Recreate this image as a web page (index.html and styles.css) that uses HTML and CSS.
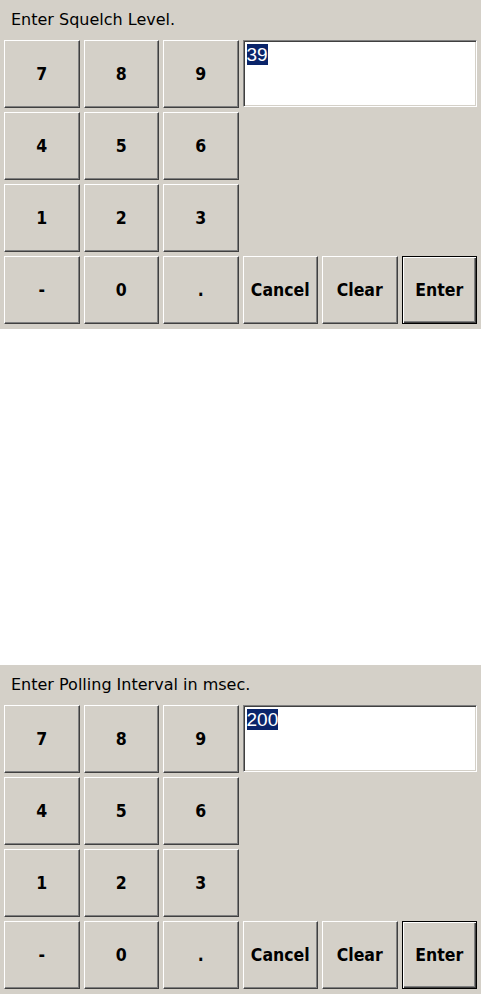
FILE: index.html
```html
<!DOCTYPE html>
<html>
<head>
<meta charset="utf-8">
<link rel="stylesheet" href="styles.css">
</head>
<body>
<div class="panel">
  <div class="prompt">Enter Squelch Level.</div>
  <div class="pad">
    <button class="key">7</button>
    <button class="key">8</button>
    <button class="key">9</button>
    <div class="field"><span class="sel">39</span></div>
    <button class="key">4</button>
    <button class="key">5</button>
    <button class="key">6</button>
    <div class="blank"></div>
    <button class="key">1</button>
    <button class="key">2</button>
    <button class="key">3</button>
    <div class="blank"></div>
    <button class="key">-</button>
    <button class="key">0</button>
    <button class="key">.</button>
    <button class="key">Cancel</button>
    <button class="key">Clear</button>
    <button class="key default">Enter</button>
  </div>
</div>
<div class="spacer"></div>
<div class="panel">
  <div class="prompt">Enter Polling Interval in msec.</div>
  <div class="pad">
    <button class="key">7</button>
    <button class="key">8</button>
    <button class="key">9</button>
    <div class="field"><span class="sel">200</span></div>
    <button class="key">4</button>
    <button class="key">5</button>
    <button class="key">6</button>
    <div class="blank"></div>
    <button class="key">1</button>
    <button class="key">2</button>
    <button class="key">3</button>
    <div class="blank"></div>
    <button class="key">-</button>
    <button class="key">0</button>
    <button class="key">.</button>
    <button class="key">Cancel</button>
    <button class="key">Clear</button>
    <button class="key default">Enter</button>
  </div>
</div>
</body>
</html>
```
FILE: styles.css
```css
html, body {
  margin: 0;
  padding: 0;
  background: #ffffff;
}

.panel {
  height: 329px;
  background: #d4d0c8;
  box-sizing: border-box;
  overflow: hidden;
}

.spacer {
  height: 336px;
  background: #ffffff;
}

.prompt {
  height: 40px;
  box-sizing: border-box;
  padding: 11px 0 0 11px;
  font-family: "DejaVu Sans", sans-serif;
  font-size: 16px;
  line-height: 18px;
  color: #000;
  white-space: nowrap;
}

.pad {
  display: grid;
  grid-template-columns: repeat(6, 1fr);
  grid-auto-rows: 68px;
  column-gap: 4px;
  row-gap: 4px;
  padding: 0 4px;
}

.key {
  margin: 0;
  padding: 0;
  background: #d4d0c8;
  border: 1px solid;
  border-color: #ffffff #404040 #404040 #ffffff;
  box-shadow: inset -1px -1px 0 #808080;
  font-family: "DejaVu Sans Condensed", "DejaVu Sans", sans-serif;
  font-weight: bold;
  font-size: 17.5px;
  color: #000;
  display: flex;
  align-items: center;
  justify-content: center;
}

.key.default {
  border-color: #000000;
  box-shadow: inset 1px 1px 0 #ffffff, inset -1px -1px 0 #404040, inset -2px -2px 0 #808080;
}

.field {
  grid-column: 4 / 7;
  height: 67px;
  box-sizing: border-box;
  background: #ffffff;
  border: 1px solid;
  border-color: #808080 #ffffff #ffffff #808080;
  box-shadow: inset 1px 1px 0 #404040, inset -1px -1px 0 #d4d0c8;
  padding: 3px 3px;
  font-family: "Liberation Sans", sans-serif;
  font-size: 19px;
  line-height: 21px;
}

.sel {
  background: #0a246a;
  color: #ffffff;
  display: inline-block;
}

.blank {
  grid-column: 4 / 7;
}
```
